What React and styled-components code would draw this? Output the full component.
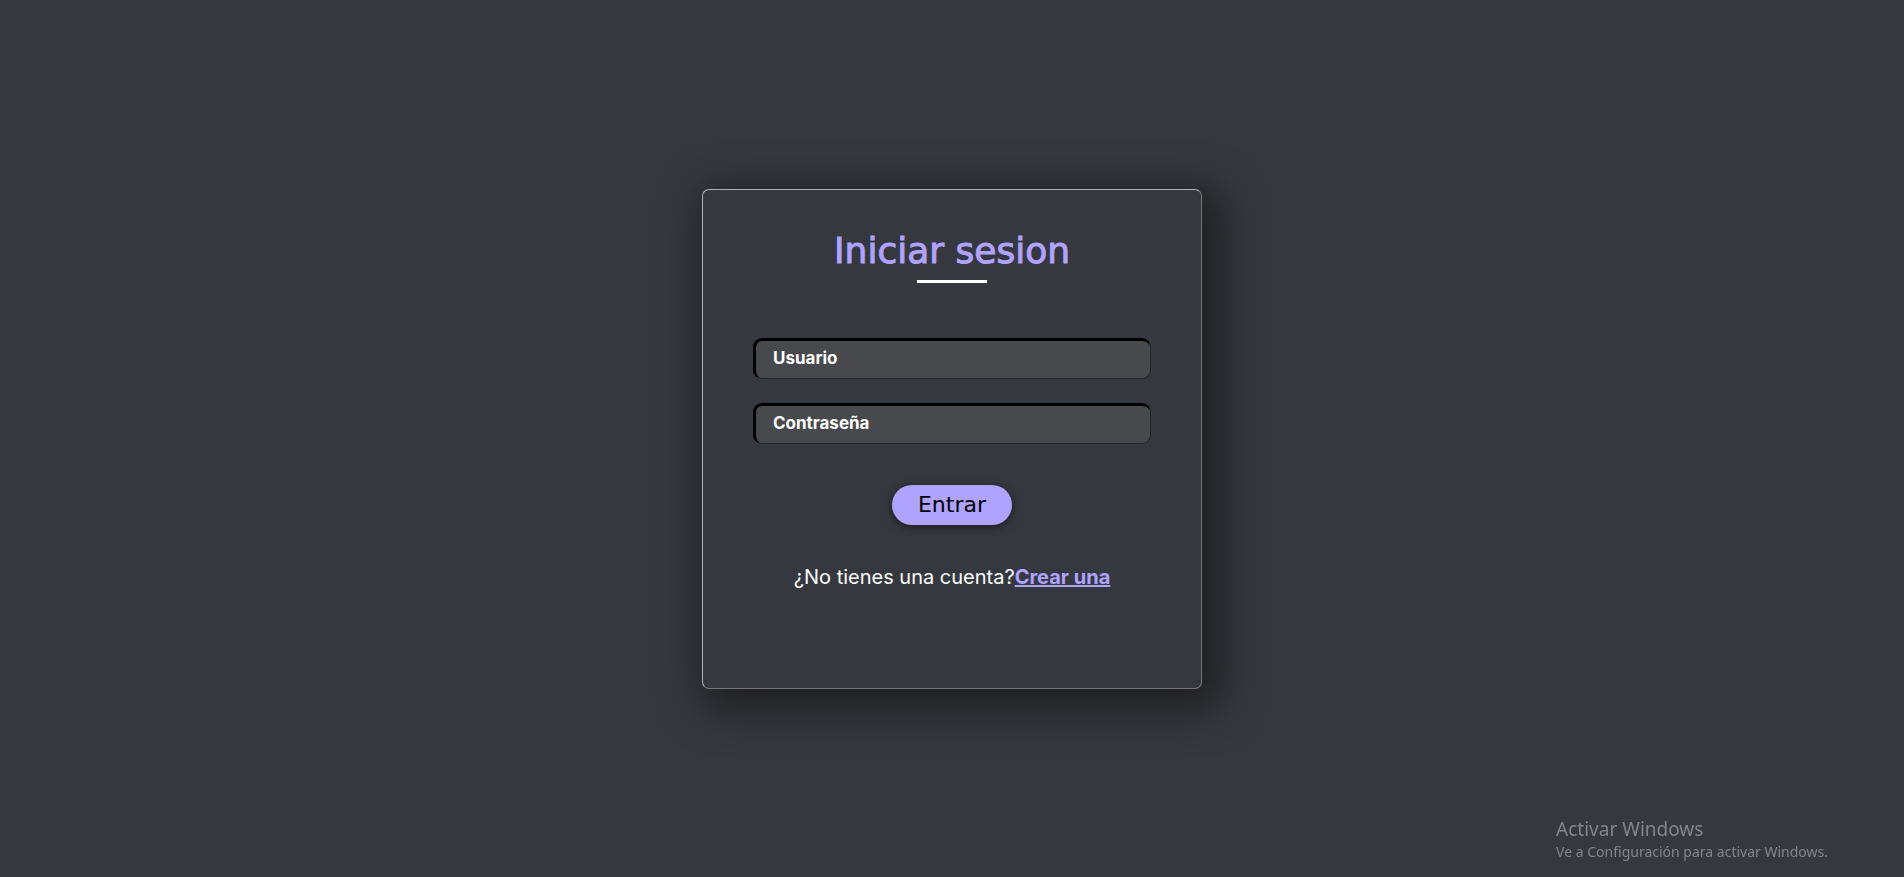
import React from 'react';
import styled, { createGlobalStyle } from 'styled-components';

const display = '"DejaVu Sans", Verdana, sans-serif';
const body = 'Inter, "Liberation Sans", sans-serif';
const accent = '#b0a2ff';

const GlobalStyle = createGlobalStyle`
  * { box-sizing: border-box; }
  body {
    margin: 0;
    background: #363840;
    color: #fff;
    font-family: ${body};
  }
`;

const Page = styled.main`
  min-height: 100vh;
  display: flex;
  align-items: center;
  justify-content: center;
  padding: 24px;
`;

const Card = styled.form`
  width: 100%;
  max-width: 500px;
  min-height: 500px;
  padding: 40px 50px;
  display: flex;
  flex-direction: column;
  align-items: center;
  border: 1px solid;
  border-color: #b0b0b0 #777 #777 #b0b0b0;
  border-radius: 7px;
  box-shadow: 10px 10px 40px 10px #1f1f1f;
`;

const Title = styled.h1`
  margin: 0;
  padding-bottom: 8px;
  display: flex;
  flex-direction: column;
  align-items: center;
  gap: 8px;
  color: ${accent};
  font: 400 36px/42px ${display};
  -webkit-text-stroke: 1px ${accent};

  &::after {
    content: '';
    width: 70px;
    height: 3px;
    background: #fff;
  }
`;

const Fields = styled.div`
  width: 100%;
  margin: 47px 0 41px;
  display: flex;
  flex-direction: column;
  gap: 24px;
`;

const Field = styled.input`
  width: 100%;
  height: 41px;
  padding: 0 17px 2px;
  border: 1px solid #242528;
  border-top: 3px solid #000;
  border-left: 3px solid #000;
  border-radius: 9px;
  background: #48494c;
  color: #fff;
  font: 700 17px/20px ${body};
  outline: none;

  &::placeholder {
    color: #fff;
    opacity: 1;
  }
`;

const Submit = styled.button`
  width: 120px;
  height: 40px;
  padding: 0;
  border: 0;
  border-radius: 20px;
  background: ${accent};
  color: #000;
  font: 400 22px/28px ${display};
  box-shadow: 0 2px 8px #1b1b1b;
  cursor: pointer;
`;

const Signup = styled.p`
  margin: 39px 0 0;
  font-size: 20px;
  line-height: 26px;
`;

const SignupLink = styled.a`
  color: ${accent};
  font-weight: 700;
`;

const Watermark = styled.aside`
  position: fixed;
  right: 76px;
  bottom: 15px;
  color: #85858a;
  font-family: "Noto Sans", "Open Sans", sans-serif;
  font-size: 14px;
  line-height: 20px;
  pointer-events: none;
`;

const WatermarkTitle = styled.div`
  font-size: 19px;
  line-height: 26px;
`;

export default function App() {
  return (
    <>
      <GlobalStyle />
      <Page>
        <Card onSubmit={(e) => e.preventDefault()}>
          <Title>Iniciar sesion</Title>
          <Fields>
            <Field type="text" name="usuario" placeholder="Usuario" aria-label="Usuario" />
            <Field type="password" name="clave" placeholder="Contraseña" aria-label="Contraseña" />
          </Fields>
          <Submit type="submit">Entrar</Submit>
          <Signup>
            ¿No tienes una cuenta?<SignupLink href="#registro">Crear una</SignupLink>
          </Signup>
        </Card>
      </Page>
      <Watermark>
        <WatermarkTitle>Activar Windows</WatermarkTitle>
        Ve a Configuración para activar Windows.
      </Watermark>
    </>
  );
}
